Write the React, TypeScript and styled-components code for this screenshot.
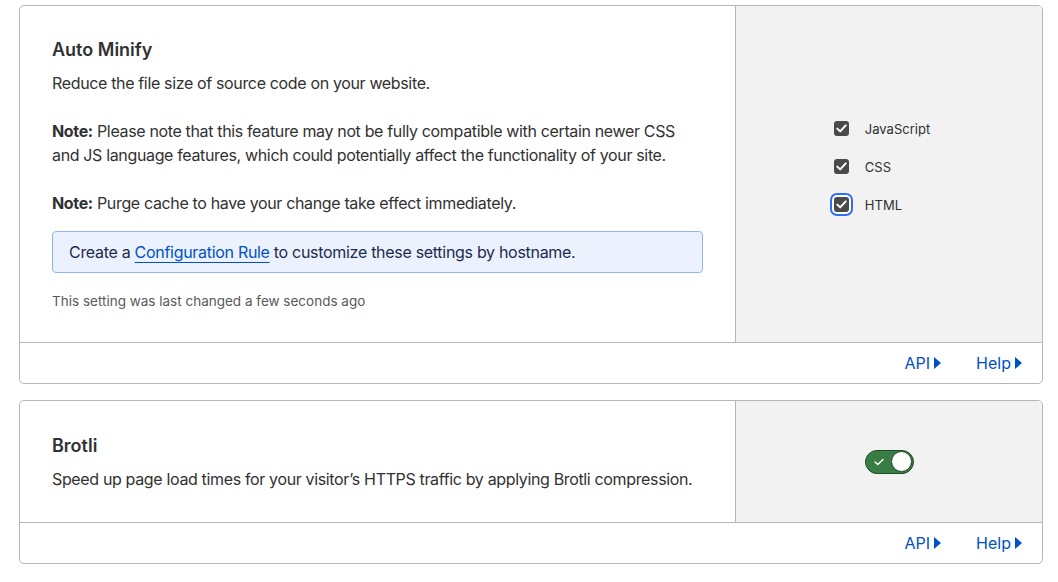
import React from "react";
import styled, { createGlobalStyle } from "styled-components";

const Global = createGlobalStyle`
  html, body { margin: 0; padding: 0; background: #ffffff; }
  body { font-family: Inter, "Noto Sans", "Liberation Sans", sans-serif; color: #313131; }
  * { box-sizing: border-box; }
`;

const Page = styled.div`
  display: flex;
  flex-direction: column;
  gap: 16px;
  padding: 5px 15px 0 19px;
`;

const Card = styled.section`
  border: 1px solid #b6b6b6;
  border-radius: 5px;
  background: #fff;
  overflow: hidden;
`;

const Body = styled.div`
  display: grid;
  grid-template-columns: 715px 1fr;
`;

const Main = styled.div<{ $pt?: number; $pb?: number }>`
  padding: ${(p) => p.$pt ?? 31}px 32px ${(p) => p.$pb ?? 31}px 32px;
  display: flex;
  flex-direction: column;
`;

const Title = styled.h2`
  margin: 0;
  font-size: 18px;
  line-height: 26px;
  font-weight: 600;
  color: #313131;
`;

const Para = styled.p<{ $gap?: number }>`
  margin: ${(p) => p.$gap ?? 8}px 0 0;
  font-size: 16px;
  line-height: 24px;
  letter-spacing: -0.35px;
  color: #313131;
  strong { font-weight: 700; }
`;

const Info = styled.div`
  margin-top: 16px;
  border: 1px solid #8db4f7;
  background: #ebf2fd;
  border-radius: 4px;
  padding: 8px 16px;
  font-size: 16px;
  line-height: 24px;
  letter-spacing: -0.3px;
  color: #1d2a4f;
`;

const InfoLink = styled.a`
  color: #0051c3;
  text-decoration: underline;
  text-underline-offset: 4px;
  text-decoration-thickness: 1px;
`;

const Meta = styled.div`
  margin-top: 18px;
  font-size: 13.5px;
  line-height: 20px;
  color: #595959;
`;

const Side = styled.div<{ $shift?: number }>`
  background: #f2f2f2;
  border-left: 1px solid #b6b6b6;
  display: flex;
  align-items: center;
  justify-content: center;
  padding-bottom: ${(p) => p.$shift ?? 0}px;
`;

const CheckList = styled.div`
  display: flex;
  flex-direction: column;
  margin-right: 14px;
`;

const CheckRow = styled.label`
  display: flex;
  align-items: center;
  gap: 16px;
  height: 38px;
  font-size: 13px;
  color: #313131;
`;

const Box = styled.span<{ $focus?: boolean }>`
  width: 15px;
  height: 15px;
  border-radius: 3px;
  background: #4a4a4a;
  display: inline-flex;
  align-items: center;
  justify-content: center;
  box-shadow: ${(p) => (p.$focus ? "0 0 0 2px #fff, 0 0 0 4px #2f6ef0" : "none")};
`;

const Toggle = styled.span`
  width: 49px;
  height: 24px;
  border-radius: 12px;
  background: #3a7d44;
  border: 1px solid #1f4a27;
  display: flex;
  align-items: center;
  justify-content: space-between;
  padding: 0 1px 0 8px;
`;

const Knob = styled.span`
  width: 21px;
  height: 21px;
  border-radius: 50%;
  background: #fff;
  border: 1px solid #1f4a27;
`;

const Footer = styled.div`
  border-top: 1px solid #b6b6b6;
  height: 41px;
  display: flex;
  align-items: center;
  justify-content: flex-end;
  gap: 35px;
  padding-right: 20px;
`;

const FootLink = styled.a`
  color: #0051c3;
  font-size: 16px;
  display: inline-flex;
  align-items: center;
  gap: 4px;
  text-decoration: none;
`;

const Caret = () => (
  <svg width="7" height="12" viewBox="0 0 7 12">
    <path d="M0 0 L7 6 L0 12 Z" fill="#0051c3" />
  </svg>
);

const Check = () => (
  <svg width="11" height="9" viewBox="0 0 11 9">
    <path d="M1.3 4.6 L4.2 7.4 L9.7 1.4" fill="none" stroke="#fff" strokeWidth="2" strokeLinecap="round" strokeLinejoin="round" />
  </svg>
);

const SmallCheck = () => (
  <svg width="10" height="8" viewBox="0 0 10 8">
    <path d="M1 4 L3.8 6.6 L9 1.4" fill="none" stroke="#fff" strokeWidth="1.4" strokeLinecap="round" strokeLinejoin="round" />
  </svg>
);

const FooterLinks = () => (
  <Footer>
    <FootLink href="#">API<Caret /></FootLink>
    <FootLink href="#">Help<Caret /></FootLink>
  </Footer>
);

export default function App() {
  return (
    <>
      <Global />
      <Page>
        <Card>
          <Body>
            <Main>
              <Title>Auto Minify</Title>
              <Para>Reduce the file size of source code on your website.</Para>
              <Para $gap={24}>
                <strong>Note:</strong> Please note that this feature may not be fully compatible with certain newer CSS and JS language features, which could potentially affect the functionality of your site.
              </Para>
              <Para $gap={24}>
                <strong>Note:</strong> Purge cache to have your change take effect immediately.
              </Para>
              <Info>
                Create a <InfoLink href="#">Configuration Rule</InfoLink> to customize these settings by hostname.
              </Info>
              <Meta>This setting was last changed a few seconds ago</Meta>
            </Main>
            <Side $shift={15}>
              <CheckList>
                <CheckRow><Box><Check /></Box>JavaScript</CheckRow>
                <CheckRow><Box><Check /></Box>CSS</CheckRow>
                <CheckRow><Box $focus><Check /></Box>HTML</CheckRow>
              </CheckList>
            </Side>
          </Body>
          <FooterLinks />
        </Card>
        <Card>
          <Body>
            <Main $pt={32} $pb={31}>
              <Title>Brotli</Title>
              <Para>Speed up page load times for your visitor’s HTTPS traffic by applying Brotli compression.</Para>
            </Main>
            <Side>
              <Toggle><SmallCheck /><Knob /></Toggle>
            </Side>
          </Body>
          <FooterLinks />
        </Card>
      </Page>
    </>
  );
}
